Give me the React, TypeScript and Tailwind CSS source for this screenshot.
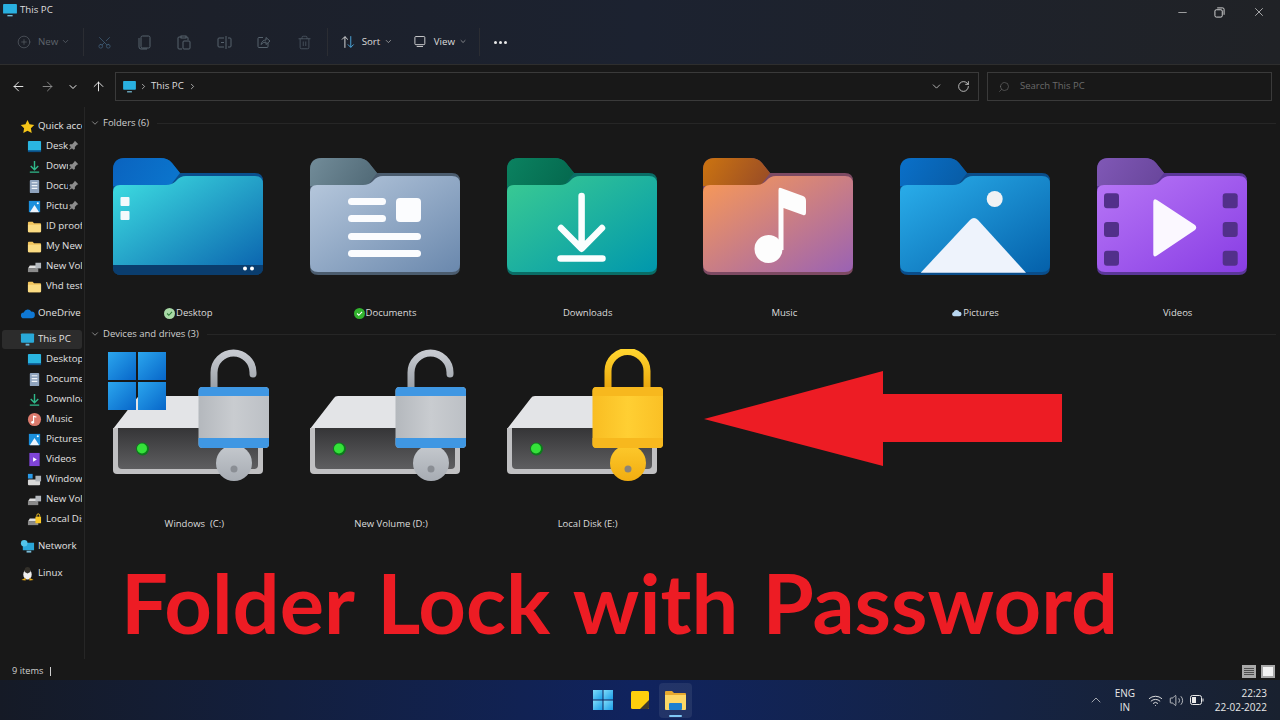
import React from "react";
import { ArrowLeft, ArrowRight, ArrowUp, ChevronDown, ChevronRight, CirclePlus, Minus, RotateCw, Scissors, Search, Trash2, Volume2, Wifi, X, ChevronUp } from "lucide-react";

type FolderProps = { id: string; back: [string, string]; front: [string, string]; edge: string; children?: React.ReactNode };

const FRONT = "M113 192Q113 185 120 185H166Q172 185 176 181Q180 176 186 176H255Q263 176 263 184V264Q263 272 255 272H121Q113 272 113 264Z";

function Folder({ id, back, front, edge, children }: FolderProps) {
  return (
    <svg width="166" height="135" viewBox="105 150 166 135" className="block">
      <defs>
        <linearGradient id={`${id}b`} x1="0" y1="0" x2="1" y2="0.3">
          <stop offset="0" stopColor={back[0]} />
          <stop offset="1" stopColor={back[1]} />
        </linearGradient>
        <linearGradient id={`${id}f`} x1="0" y1="0" x2="1" y2="1">
          <stop offset="0" stopColor={front[0]} />
          <stop offset="1" stopColor={front[1]} />
        </linearGradient>
      </defs>
      <path d="M113 170Q113 158 125 158H160Q168 158 172 163L180 173H255Q263 173 263 181V267Q263 275 255 275H121Q113 275 113 267Z" fill={edge} />
      <path d="M113 190V170Q113 158 125 158H160Q168 158 172 163L180 173L170 186H113Z" fill={`url(#${id}b)`} />
      <path d={FRONT} fill={`url(#${id}f)`} />
      {children}
    </svg>
  );
}

function Drive({ id, variant }: { id: string; variant: "open" | "closed" | "win" }) {
  const gold = variant === "closed";
  return (
    <svg width="166" height="135" viewBox="105 350 166 135" className="block">
      <defs>
        <linearGradient id={`${id}s`} x1="0" y1="0" x2="0" y2="1"><stop offset="0" stopColor="#353537" /><stop offset="1" stopColor="#5e5e60" /></linearGradient>
        <linearGradient id={`${id}l`} x1="0" y1="0" x2="1" y2="0"><stop offset="0" stopColor={gold ? "#f9bd22" : "#b4b8bd"} /><stop offset="0.5" stopColor={gold ? "#ffcf33" : "#c9ccd0"} /><stop offset="1" stopColor={gold ? "#fac025" : "#bcc0c5"} /></linearGradient>
        <linearGradient id={`${id}k`} x1="0" y1="0" x2="0" y2="1"><stop offset="0" stopColor={gold ? "#fdc92c" : "#c5c9ce"} /><stop offset="1" stopColor={gold ? "#f2ad10" : "#a7acb3"} /></linearGradient>
        <linearGradient id={`${id}h`} x1="0" y1="0" x2="0" y2="1"><stop offset="0" stopColor={gold ? "#ffd42e" : "#c7cad0"} /><stop offset="1" stopColor={gold ? "#eca90e" : "#9ba1a8"} /></linearGradient>
        <linearGradient id={`${id}w`} x1="0" y1="0" x2="1" y2="1"><stop offset="0" stopColor="#2ba6ee" /><stop offset="1" stopColor="#0766c9" /></linearGradient>
      </defs>
      <path d="M113 430L137 399Q138 397 141 397H263V430Z" fill="#e3e4e7" />
      <path d="M113 429H263V471Q263 475 259 475H117Q113 475 113 471Z" fill="#c0c0c2" />
      <path d="M118 429H258V466Q258 470 254 470H122Q118 470 118 466Z" fill={`url(#${id}s)`} />
      <circle cx="142.500" cy="450" r="6.500" fill="#0d7a1c" />
      <circle cx="142" cy="449.500" r="5" fill="#35e23a" />
      {gold ? (
        <path d="M607 388V372A19.500 19.500 0 0 1 646 372V388" transform="translate(-393 0)" fill="none" stroke={`url(#${id}h)`} strokeWidth="7" />
      ) : (
        <path d="M214 388V373.500A19.500 19.500 0 0 1 253 373.500V375" fill="none" stroke={`url(#${id}h)`} strokeWidth="7" strokeLinecap="round" />
      )}
      <circle cx="234" cy="464" r="18" fill={`url(#${id}k)`} />
      <circle cx="234" cy="470" r="3.500" fill={gold ? "#8b8478" : "#8a8e94"} />
      <rect x="198.500" y="388" width="70.500" height="61" rx="4" fill={`url(#${id}l)`} />
      <path d="M198.500 397V392Q198.500 388 202.500 388H265Q269 388 269 392V397Z" fill={gold ? "#f7b81e" : "#3f97e3"} />
      <path d="M198.500 439H269V445Q269 449 265 449H202.500Q198.500 449 198.500 445Z" fill={gold ? "#f7b81e" : "#3f97e3"} />
      {variant === "win" && (
        <g fill={`url(#${id}w)`}>
          <rect x="108" y="353" width="28" height="28" />
          <rect x="138" y="353" width="28" height="28" />
          <rect x="108" y="383" width="28" height="28" />
          <rect x="138" y="383" width="28" height="28" />
        </g>
      )}
    </svg>
  );
}

function Mini({ kind }: { kind: string }) {
  const box = (c: React.ReactNode) => <svg width="15" height="15" viewBox="0 0 16 16" className="block shrink-0">{c}</svg>;
  switch (kind) {
    case "star": return box(<path d="M8 1l2.200 4.600 5 .7-3.600 3.500.9 5L8 12.400 3.500 14.800l.9-5L.8 6.300l5-.7z" fill="#f5c518" />);
    case "desktop": return box(<><rect x="1" y="2" width="14" height="11.500" rx="1" fill="#2ab5e0" /><rect x="1" y="12" width="14" height="2" fill="#0b4f86" /></>);
    case "down": return box(<path d="M8 2v9M4 7.500L8 11.500 12 7.500M3 14h10" fill="none" stroke="#2fb98a" strokeWidth="1.500" />);
    case "doc": return box(<><rect x="3" y="1" width="10" height="14" rx="1" fill="#8fa3bd" /><path d="M5 4h6M5 7h6M5 10h6" stroke="#eef2f7" strokeWidth="1.200" /></>);
    case "pic": return box(<><rect x="2" y="2" width="12" height="12" fill="#1b8fdc" /><path d="M3 14L8 6.500 13 14z" fill="#eef4fc" /><circle cx="11.500" cy="4.500" r="1.100" fill="#fff" /></>);
    case "folder": return box(<><path d="M1 4q0-1 1-1h4l1.500 1.500H14q1 0 1 1V13q0 1-1 1H2q-1 0-1-1z" fill="#f2c55c" /><path d="M1 6h14v7q0 1-1 1H2q-1 0-1-1z" fill="#fbdc83" /></>);
    case "cloud": return box(<path d="M4 13a3 3 0 010-6 4.500 4.500 0 018.200-1A3.500 3.500 0 0112.500 13z" fill="#0f78d4" />);
    case "pc": return box(<><rect x="1" y="1.500" width="14" height="10" rx="1" fill="#29a9d9" /><path d="M6 13.500h4" stroke="#6ab7d8" strokeWidth="2" /></>);
    case "music": return box(<><circle cx="8" cy="8" r="7" fill="#db7a6c" /><path d="M7 11V4.500l3 1" fill="none" stroke="#fff" strokeWidth="1.200" /><circle cx="6" cy="11" r="1.500" fill="#fff" /></>);
    case "video": return box(<><rect x="2.500" y="1" width="11" height="14" fill="#7f44d8" /><path d="M6.500 5.500L10.500 8l-4 2.500z" fill="#fff" /></>);
    case "win": return box(<><rect x="1" y="8" width="13" height="6" rx="1" fill="#d8d8d8" /><rect x="1" y="2" width="5" height="5" fill="#2a9be8" /><rect x="9" y="4" width="6" height="6" fill="#aeb3b8" /></>);
    case "vol": return box(<><path d="M1 10l2-3h8v3z" fill="#e0e0e0" /><rect x="1" y="10" width="11" height="4" fill="#8a8a8a" /><rect x="9" y="4" width="6" height="6" fill="#b4b8bd" /></>);
    case "locked": return box(<><path d="M1 10l2-3h8v3z" fill="#e0e0e0" /><rect x="1" y="10" width="11" height="4" fill="#8a8a8a" /><rect x="9" y="5" width="6" height="7" fill="#fac825" /><path d="M10.500 5V3.500a1.500 1.500 0 013 0V5" fill="none" stroke="#fac825" /></>);
    case "net": return box(<><rect x="3" y="4" width="12" height="8" fill="#2aa6d8" /><circle cx="4.500" cy="4.500" r="3.500" fill="#53c5ea" /><path d="M7 13.500h5" stroke="#79bbd6" strokeWidth="2" /></>);
    default: return box(<><ellipse cx="8" cy="9" rx="4.500" ry="5.500" fill="#f0f0f0" /><path d="M8 1c-3 0-3.500 3-3 5.500L8 8l3-1.500C11.500 4 11 1 8 1z" fill="#33302a" /><path d="M1.500 15L6 12.500 6 15.500zM14.500 15L10 12.500 10 15.500z" fill="#e7a916" /></>);
  }
}

function Pin() {
  return (
    <svg width="11" height="11" viewBox="0 0 16 16" className="shrink-0 absolute right-[5px] top-[4px]">
      <path d="M10 1l5 5-2 1-3 3 0 3-2 1-6-6 1-2 3 0 3-3z M4 10l-3 5 5-3z" fill="#8d8d8d" />
    </svg>
  );
}

function NavRow({ kind, label, indent, pin, selected, className }: { kind: string; label: string; indent?: boolean; pin?: boolean; selected?: boolean; className?: string }) {
  return (
    <div className={`relative flex items-center h-5 shrink-0 ${className ?? ""}`}>
      {selected && <div className="absolute left-[2px] right-[2px] top-px bottom-0 bg-[#2c2c2c] rounded-[3px]" />}
      <div className={`relative flex items-center ${indent ? "pl-[27px] gap-[4px]" : "pl-[20px] gap-[3px]"}`}>
        <Mini kind={kind} />
        <span className={`block overflow-hidden whitespace-nowrap text-[9.700px] text-[#e2e2e2] ${pin ? "w-[22px]" : indent ? "w-[36px]" : "w-[44px]"}`}>{label}</span>
      </div>
      {pin && <Pin />}
    </div>
  );
}

function SectionHeader({ label }: { label: string }) {
  return (
    <div className="flex items-center h-5 pl-[5px] shrink-0">
      <ChevronDown size={10} strokeWidth={2} className="text-[#9a9a9a]" />
      <span className="ml-[3px] text-[9.500px] text-[#d0d0d0] whitespace-nowrap">{label}</span>
      <div className="ml-2 flex-1 h-px bg-[#262626]" />
    </div>
  );
}

function Label({ text, status }: { text: string; status?: "check" | "checkSolid" | "cloud" }) {
  return (
    <div className="flex justify-center items-center h-[14px] text-[9.500px] text-[#dcdcdc] whitespace-pre">
      <span className="w-[12px] flex justify-start shrink-0">
        {status === "check" && <svg width="11" height="11" viewBox="0 0 10 10"><circle cx="5" cy="5" r="5" fill="#a8d9a6" /><path d="M2.800 5L4.400 6.600 7.300 3.600" stroke="#2f7d39" fill="none" /></svg>}
        {status === "checkSolid" && <svg width="11" height="11" viewBox="0 0 10 10"><circle cx="5" cy="5" r="5" fill="#32b32e" /><path d="M2.800 5L4.400 6.600 7.300 3.600" stroke="#fff" fill="none" /></svg>}
        {status === "cloud" && <svg width="11" height="10" viewBox="0 0 12 10"><path d="M3 8.500a2.300 2.300 0 010-4.500 3.200 3.200 0 016-.5 2.500 2.500 0 010 5z" fill="#b8d6f0" /></svg>}
      </span>
      <span>{text}</span>
    </div>
  );
}

function ToolIcon({ children }: { children: React.ReactNode }) {
  return <div className="w-[40px] flex justify-center items-center text-[#56626d] shrink-0">{children}</div>;
}

function Sep({ className }: { className?: string }) {
  return <div className={`w-px h-[28px] bg-[#2b2d33] shrink-0 ${className ?? ""}`} />;
}

const NAV_TOP = [
  ["desktop", "Desktop", true],
  ["down", "Downloads", true],
  ["doc", "Documents", true],
  ["pic", "Pictures", true],
  ["folder", "ID proof", false],
  ["folder", "My New", false],
  ["vol", "New Vol", false],
  ["folder", "Vhd test", false],
] as const;

const NAV_PC = [
  ["desktop", "Desktop"], ["doc", "Documents"], ["down", "Downloads"], ["music", "Music"], ["pic", "Pictures"],
  ["video", "Videos"], ["win", "Windows"], ["vol", "New Vol"], ["locked", "Local Disk"],
] as const;

export default function App() {
  return (
    <div className="relative w-[1280px] h-[720px] overflow-hidden flex flex-col bg-[#181818] text-white font-['Open_Sans','Noto_Sans',sans-serif]">
      {/* Title + toolbar */}
      <div className="h-[65px] shrink-0 flex flex-col border-b border-[#2e2e2e] bg-linear-to-r from-[#1c1f27] via-[#1c2230] to-[#202226]">
        <div className="h-[21px] flex items-center relative">
          <div className="pl-[3px] flex items-center gap-[3px]">
            <svg width="14" height="13" viewBox="0 0 16 15"><rect x="0" y="0" width="16" height="11" rx="1" fill="#29b0e0" /><path d="M5 13.500h6" stroke="#7ac2dd" strokeWidth="1.500" /></svg>
            <span className="text-[9.700px] text-[#dedede]">This PC</span>
          </div>
          <div className="ml-auto flex items-center text-[#e0e0e0] pr-[14px] pt-[3px]">
            <Minus size={13} strokeWidth={1.200} className="mr-[25px]" />
            <svg width="11" height="11" viewBox="0 0 12 12" className="mr-[27px]"><rect x="1" y="3" width="8" height="8" rx="1.500" fill="none" stroke="currentColor" /><path d="M3.500 1h6q1.500 0 1.500 1.500v6" fill="none" stroke="currentColor" /></svg>
            <X size={14} strokeWidth={1.200} />
          </div>
        </div>
        <div className="flex-1 flex items-center pl-[17px] pb-[1px]">
          <div className="w-[57px] flex items-center text-[#5e646c] shrink-0">
            <CirclePlus size={14} strokeWidth={1.100} className="mr-[7px]" />
            <span className="text-[9.700px]">New</span>
            <ChevronDown size={9} className="ml-[3px]" />
          </div>
          <Sep className="ml-[9px]" />
          <ToolIcon><Scissors size={15} strokeWidth={1.100} className="-rotate-90 text-[#456580]" /></ToolIcon>
          <ToolIcon><svg width="13" height="15" viewBox="0 0 13 15" fill="none" stroke="currentColor"><rect x="3" y="1" width="9" height="12" rx="1.500" /><path d="M1 3v9q0 2 2 2h6" /></svg></ToolIcon>
          <ToolIcon><svg width="14" height="15" viewBox="0 0 14 15" fill="none" stroke="currentColor"><path d="M4 2H2Q1 2 1 3v10q0 1 1 1h3M9 2h1q1 0 1 1v2" /><rect x="4" y="1" width="5" height="2" /><rect x="6" y="6" width="7" height="8" rx="1" /></svg></ToolIcon>
          <ToolIcon><svg width="15" height="13" viewBox="0 0 15 13" fill="none" stroke="currentColor"><path d="M7 2H2Q1 2 1 3v7q0 1 1 1h5M11 2h2q1 0 1 1v7q0 1-1 1h-2M9 0v13M4 6.500h3" /></svg></ToolIcon>
          <ToolIcon><svg width="14" height="14" viewBox="0 0 14 14" fill="none" stroke="currentColor"><path d="M6 2.500H2Q1 2.500 1 3.500v8q0 1 1 1h8q1 0 1-1V8" /><path d="M4 9.500Q5 5 9 5V2.500L13 6 9 9.500V7Q6 7 4 9.500z" /></svg></ToolIcon>
          <ToolIcon><Trash2 size={15} strokeWidth={1.100} /></ToolIcon>
          <Sep className="ml-[3px]" />
          <div className="flex items-center ml-[13px] text-[#dcdcdc] w-[52px] shrink-0">
            <svg width="14" height="14" viewBox="0 0 14 14" fill="none" className="mr-[7px]"><path d="M4 13V1.500M1 4.500L4 1.500 7 4.500" stroke="#d9d9d9" /><path d="M10 1v11.500M7 9.500L10 12.500 13 9.500" stroke="#4aa3d8" /></svg>
            <span className="text-[9.700px]">Sort</span>
            <ChevronDown size={9} className="ml-[4px] text-[#b0b0b0]" />
          </div>
          <div className="flex items-center ml-[21px] text-[#dcdcdc] w-[53px] shrink-0">
            <svg width="13" height="13" viewBox="0 0 13 13" fill="none" stroke="currentColor" className="mr-[8px]"><rect x="1" y="1" width="11" height="9" rx="1" /><path d="M3 12h7" /></svg>
            <span className="text-[9.700px]">View</span>
            <ChevronDown size={9} className="ml-[4px] text-[#b0b0b0]" />
          </div>
          <Sep className="ml-[12px]" />
          <div className="ml-[14px] flex gap-[2px]">
            <div className="w-[3px] h-[3px] rounded-full bg-[#e8e8e8]" />
            <div className="w-[3px] h-[3px] rounded-full bg-[#e8e8e8]" />
            <div className="w-[3px] h-[3px] rounded-full bg-[#e8e8e8]" />
          </div>
        </div>
      </div>

      {/* Address bar */}
      <div className="h-[42px] shrink-0 flex items-center pt-[1px]">
        <div className="w-[115px] flex items-center text-[#efefef] shrink-0">
          <ArrowLeft size={15} strokeWidth={1.500} className="ml-[11px]" />
          <ArrowRight size={15} strokeWidth={1.500} className="ml-[14px] text-[#8d8d8d]" />
          <ChevronDown size={12} strokeWidth={2} className="ml-[12px]" />
          <ArrowUp size={15} strokeWidth={1.500} className="ml-[12px]" />
        </div>
        <div className="w-[864px] h-[29px] border border-[#3a3a3a] flex items-center pl-[7px] pr-[8px] shrink-0">
          <svg width="13" height="12" viewBox="0 0 16 15"><rect x="0" y="0" width="16" height="11" rx="1" fill="#29b0e0" /><path d="M5 13.500h6" stroke="#7ac2dd" strokeWidth="1.500" /></svg>
          <ChevronRight size={9} strokeWidth={2} className="ml-[3px] text-[#cfcfcf]" />
          <span className="ml-[3px] text-[9.700px] text-[#dedede]">This PC</span>
          <ChevronRight size={9} strokeWidth={2} className="ml-[4px] text-[#cfcfcf]" />
          <ChevronDown size={13} strokeWidth={1.500} className="ml-auto text-[#d0d0d0]" />
          <RotateCw size={13} strokeWidth={1.500} className="ml-[14px] text-[#d8d8d8]" />
        </div>
        <div className="ml-[8px] w-[285px] h-[29px] border border-[#3a3a3a] flex items-center pl-[10px] shrink-0">
          <Search size={12} strokeWidth={1.200} className="-scale-x-100 text-[#6f6f6f]" />
          <span className="ml-[10px] text-[9.500px] text-[#6a6a6a]">Search This PC</span>
        </div>
      </div>

      {/* Main */}
      <div className="flex-1 flex min-h-0">
        <div className="w-[85px] shrink-0 border-r border-[#262626] pt-[9px] flex flex-col overflow-hidden">
          <NavRow kind="star" label="Quick access" />
          {NAV_TOP.map(([k, l, p]) => <NavRow key={l} kind={k} label={l} indent pin={p} />)}
          <NavRow kind="cloud" label="OneDrive" className="mt-[7px]" />
          <NavRow kind="pc" label="This PC" selected className="mt-[6px]" />
          {NAV_PC.map(([k, l]) => <NavRow key={l} kind={k} label={l} indent />)}
          <NavRow kind="net" label="Network" className="mt-[7px]" />
          <NavRow kind="linux" label="Linux" className="mt-[7px]" />
        </div>
        <div className="flex-1 min-w-0 flex flex-col pt-[6px] pr-[4px]">
          <SectionHeader label="Folders (6)" />
          <div className="grid grid-cols-6 w-[1180px] mt-[17px] ml-[5px] shrink-0">
            <div className="flex flex-col items-center">
              <Folder id="a" back={["#0a63bf", "#0b74cc"]} front={["#3ee0e2", "#0a62ae"]} edge="#0a4f8e">
                <rect x="120.500" y="197" width="9" height="9" rx="1" fill="#f3f9fc" />
                <rect x="120.500" y="211" width="9" height="9" rx="1" fill="#f3f9fc" />
                <path d="M113 265H263V267Q263 275 255 275H121Q113 275 113 267Z" fill="#0a3d6e" />
                <circle cx="245" cy="268.500" r="2" fill="#fff" />
                <circle cx="252" cy="268.500" r="2" fill="#fff" />
              </Folder>
              <div className="mt-[21px]"><Label text="Desktop" status="check" /></div>
            </div>
            <div className="flex flex-col items-center">
              <Folder id="b" back={["#728c99", "#546d7a"]} front={["#b8c9dd", "#6a88ad"]} edge="#4b5c6e">
                <g fill="#fbfcfe">
                  <rect x="151" y="198" width="38" height="7" rx="3.500" />
                  <rect x="199" y="198" width="25" height="24" rx="4" />
                  <rect x="151" y="215" width="38" height="7" rx="3.500" />
                  <rect x="151" y="233" width="73" height="7" rx="3.500" />
                  <rect x="151" y="250" width="73" height="7" rx="3.500" />
                </g>
              </Folder>
              <div className="mt-[21px]"><Label text="Documents" status="checkSolid" /></div>
            </div>
            <div className="flex flex-col items-center">
              <Folder id="c" back={["#0b8260", "#056b50"]} front={["#3bcb92", "#0097ad"]} edge="#0a6d66">
                <path d="M187.600 196V248M167 228L187.600 248.700 208 228M166.500 258.500H208.500" fill="none" stroke="#fbfefe" strokeWidth="6.500" strokeLinecap="round" strokeLinejoin="round" />
              </Folder>
              <div className="mt-[21px]"><Label text="Downloads" /></div>
            </div>
            <div className="flex flex-col items-center">
              <Folder id="d" back={["#cc7410", "#9e5024"]} front={["#fa9a55", "#9a62b4"]} edge="#7d4a63">
                <circle cx="178.500" cy="249" r="14" fill="#fdfdfd" />
                <path d="M188.500 190Q188.500 187 191 188L213 196Q216 197 216 201V212Q216 216 213 215L193.500 208V250H188.500Z" fill="#fdfdfd" />
              </Folder>
              <div className="mt-[21px]"><Label text="Music" /></div>
            </div>
            <div className="flex flex-col items-center">
              <Folder id="e" back={["#0a70c9", "#085ea9"]} front={["#2bb0ec", "#0460aa"]} edge="#0a4d8a">
                <circle cx="207.700" cy="199" r="8" fill="#f0f2f4" />
                <path d="M133.700 272.700L183 220Q187 216 191 220L239 272.700Z" fill="#eef3fc" />
              </Folder>
              <div className="mt-[21px]"><Label text="Pictures" status="cloud" /></div>
            </div>
            <div className="flex flex-col items-center">
              <Folder id="f" back={["#8058b6", "#6b489e"]} front={["#b877f6", "#883de4"]} edge="#5b3799">
                <g fill="#52308a">
                  <rect x="120" y="193.300" width="15" height="15" rx="3" />
                  <rect x="120" y="222" width="15" height="15" rx="3" />
                  <rect x="120" y="250.700" width="15" height="15" rx="3" />
                  <rect x="238.700" y="193.300" width="15" height="15" rx="3" />
                  <rect x="238.700" y="222" width="15" height="15" rx="3" />
                  <rect x="238.700" y="250.700" width="15" height="15" rx="3" />
                </g>
                <path d="M169.300 202Q169.300 198 173 200L211 225Q213.500 227.700 211 230L173 255.500Q169.300 258 169.300 254Z" fill="#fbf8ff" />
              </Folder>
              <div className="mt-[21px]"><Label text="Videos" /></div>
            </div>
          </div>
          <div className="mt-[4px]"><SectionHeader label="Devices and drives (3)" /></div>
          <div className="grid grid-cols-6 w-[1180px] mt-[5px] ml-[5px] shrink-0">
            <div className="flex flex-col items-center">
              <Drive id="w" variant="win" />
              <div className="mt-[33px]"><Label text="Windows  (C:)" /></div>
            </div>
            <div className="flex flex-col items-center">
              <Drive id="n" variant="open" />
              <div className="mt-[33px]"><Label text="New Volume (D:)" /></div>
            </div>
            <div className="flex flex-col items-center">
              <Drive id="l" variant="closed" />
              <div className="mt-[33px]"><Label text="Local Disk (E:)" /></div>
            </div>
          </div>
        </div>
      </div>

      {/* Status bar */}
      <div className="h-[21px] shrink-0 flex items-center pl-[12px] pr-[5px] pt-[3px]">
        <span className="text-[9.200px] text-[#cfcfcf]">9 items</span>
        <div className="ml-[7px] w-px h-[9px] bg-[#cfcfcf]" />
        <div className="ml-auto flex gap-[5px]">
          <div className="w-[14px] h-[13px] bg-[#a8a8a8] flex flex-col justify-center gap-px px-[2px]">
            <div className="h-px bg-[#4d4d4d]" /><div className="h-px bg-[#4d4d4d]" /><div className="h-px bg-[#4d4d4d]" /><div className="h-px bg-[#4d4d4d]" />
          </div>
          <div className="w-[14px] h-[13px] bg-[#a8a8a8] p-[2px]"><div className="w-full h-full bg-[#f2f2f2]" /></div>
        </div>
      </div>

      {/* Taskbar */}
      <div className="h-[40px] shrink-0 flex items-center relative bg-linear-to-r from-[#151a26] via-[#10235e] to-[#19212f]">
        <div className="ml-[585px] w-[36px] flex justify-center">
          <svg width="20" height="20" viewBox="0 0 20 20">
            <defs><linearGradient id="tw" x1="0" y1="0" x2="1" y2="1"><stop offset="0" stopColor="#7fdcf9" /><stop offset="1" stopColor="#1a9de8" /></linearGradient></defs>
            <g fill="url(#tw)"><rect x="0" y="0" width="9.500" height="9.500" /><rect x="10.500" y="0" width="9.500" height="9.500" /><rect x="0" y="10.500" width="9.500" height="9.500" /><rect x="10.500" y="10.500" width="9.500" height="9.500" /></g>
          </svg>
        </div>
        <div className="w-[38px] flex justify-center">
          <svg width="18" height="18" viewBox="0 0 18 18"><rect width="18" height="18" rx="1.500" fill="#fdcf0d" /><path d="M18 9v7.500q0 1.500-1.500 1.500H9z" fill="#3f3a2c" /></svg>
        </div>
        <div className="relative w-[33px] h-[35px] mt-px bg-[#ffffff14] rounded-[4px] flex justify-center items-center">
          <svg width="21" height="21" viewBox="0 0 21 21"><path d="M0 2q0-1 1-1h6l2 2h11q1 0 1 1v3H0z" fill="#e6a92e" /><path d="M0 5h21v14q0 1-1 1H1q-1 0-1-1z" fill="#fbd766" /><rect x="4" y="13" width="13" height="7" rx="1" fill="#1a7fd0" /></svg>
          <div className="absolute bottom-[1px] left-[10px] w-[13px] h-[2.500px] rounded-full bg-[#7fc7f5]" />
        </div>
        <div className="ml-auto flex items-center text-[#e8e8e8]">
          <ChevronUp size={16} strokeWidth={1} />
          <div className="ml-[10px] w-[22px] flex flex-col items-center text-[10px] leading-[14px]"><span>ENG</span><span>IN</span></div>
          <Wifi size={15} strokeWidth={1.500} className="ml-[12px]" />
          <Volume2 size={15} strokeWidth={1.200} className="ml-[6px]" />
          <svg width="14" height="10" viewBox="0 0 14 10" fill="none" stroke="currentColor" className="ml-[6px]"><rect x="0.500" y="0.500" width="11" height="9" rx="2" /><rect x="2" y="2" width="4" height="6" fill="currentColor" stroke="none" /><path d="M13 3.500v3" /></svg>
          <div className="ml-[11px] mr-[13px] flex flex-col items-end text-[10px] leading-[14px]"><span>22:23</span><span>22-02-2022</span></div>
        </div>
      </div>

      {/* Overlaid annotation */}
      <svg className="absolute left-[704px] top-[371px]" width="358" height="95" viewBox="0 0 358 95">
        <path d="M0 48L179 0V23H358V71H179V95Z" fill="#ed1c24" />
      </svg>
      <div className="absolute left-[121px] top-[554px] text-[83px] leading-[96px] font-bold text-[#ed1c24] whitespace-nowrap [word-spacing:4px] font-['Lato',sans-serif]">Folder Lock with Password</div>
    </div>
  );
}
